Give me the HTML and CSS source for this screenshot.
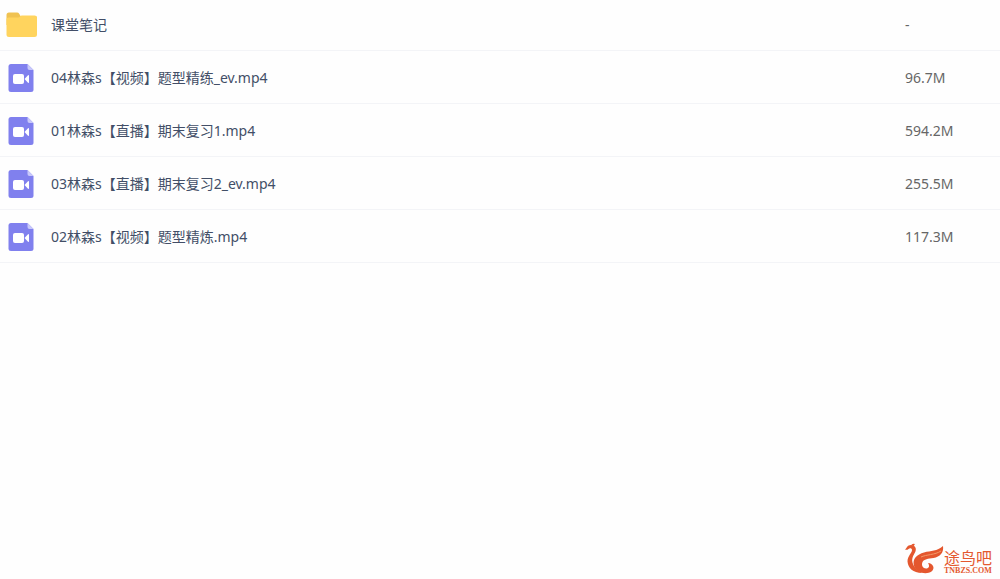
FILE: index.html
```html
<!DOCTYPE html>
<html lang="zh-CN">
<head>
    <meta charset="UTF-8">
    <meta name="viewport" content="width=device-width, initial-scale=1.0">
    <title>课堂笔记</title>
    <link rel="stylesheet" href="styles.css">
</head>
<body>

    <!-- shared file icons -->
    <svg class="sprite" aria-hidden="true">
        <symbol id="icon-folder" viewBox="0 0 32 28">
            <path d="M0.500 4Q0.500 1.500 3 1.500H11Q12.500 1.500 13.200 2.700L14.500 5H29Q31 5 31 7V14H0.500Z" fill="#f0c251"/>
            <path d="M0.500 8Q0.500 6.500 2.500 6.500H12Q13.500 6.500 14 5.500Q14.500 4.500 16 4.500H28.500Q31 4.500 31 7V23.500Q31 26 28.500 26H3Q0.500 26 0.500 23.500Z" fill="#ffd45e"/>
        </symbol>
        <symbol id="icon-video" viewBox="0 0 32 28">
            <path d="M5 0H21.500L27.500 6V25.500Q27.500 28 25 28H5Q2.500 28 2.500 25.500V2.500Q2.500 0 5 0Z" fill="#8080ee"/>
            <path d="M21.500 0L27.500 6H23.500Q21.500 6 21.500 4Z" fill="#c8c8fa"/>
            <rect x="7" y="10" width="11" height="10" rx="2" fill="#fff"/>
            <path d="M18.500 15L22 11.200Q23 10.500 23 12V18Q23 19.500 22 18.800Z" fill="#fff"/>
        </symbol>
    </svg>

    <main>
        <table class="file-list">
            <tbody>
                <tr>
                    <td class="name"><div class="file"><svg class="icon" aria-hidden="true"><use href="#icon-folder"/></svg><span>课堂笔记</span></div></td>
                    <td class="size">-</td>
                </tr>
                <tr>
                    <td class="name"><div class="file"><svg class="icon" aria-hidden="true"><use href="#icon-video"/></svg><span>04林森s【视频】题型精练_ev.mp4</span></div></td>
                    <td class="size">96.7M</td>
                </tr>
                <tr>
                    <td class="name"><div class="file"><svg class="icon" aria-hidden="true"><use href="#icon-video"/></svg><span>01林森s【直播】期末复习1.mp4</span></div></td>
                    <td class="size">594.2M</td>
                </tr>
                <tr>
                    <td class="name"><div class="file"><svg class="icon" aria-hidden="true"><use href="#icon-video"/></svg><span>03林森s【直播】期末复习2_ev.mp4</span></div></td>
                    <td class="size">255.5M</td>
                </tr>
                <tr>
                    <td class="name"><div class="file"><svg class="icon" aria-hidden="true"><use href="#icon-video"/></svg><span>02林森s【视频】题型精炼.mp4</span></div></td>
                    <td class="size">117.3M</td>
                </tr>
            </tbody>
        </table>
    </main>

    <footer class="brand">
        <svg class="brand-logo" viewBox="0 0 40 32" aria-hidden="true">
            <path d="M1 6.500C3 5 3 2 7 2C11.500 2 13 6 11 9.500C9.500 12.500 7.500 15 8.500 19.500C9.500 24 13 27 18 30C9 30 4 25 3.500 18.500C3.500 13 8 10 8 7C8 5 5.500 5 4.500 6C3.500 7 2 7 1 6.500Z" fill="#e4572e"/>
            <path d="M7 2.500Q8 0 11 1Q10 2 10 3Z" fill="#e4572e"/>
            <path d="M39 3C40 9.500 36 14 29.500 15C24 15.800 20 16 18.500 19C17 22.500 19 25.500 22 25.500C25 25.500 26 23 24 20C29 20.500 31.500 25 27.500 28.500C22.500 32 12 30 10 23C8 15.500 13 11.500 20 9.500C27 7.500 33 8.500 39 3Z" fill="#e4572e"/>
            <path d="M17 14C22 11.500 31 12 37 8" fill="none" stroke="#f39a68" stroke-width="1"/>
        </svg>
        <div class="brand-text">
            <span class="brand-name">途鸟吧</span>
            <span class="brand-url">TNBZS.COM</span>
        </div>
    </footer>

</body>
</html>
```

FILE: styles.css
```css
* {
    box-sizing: border-box;
}
body {
    display: flex;
    flex-direction: column;
    justify-content: space-between;
    min-height: 100vh;
    margin: 0;
    background-color: #fefefe;
    color: #424e67;
    font-family: "Noto Sans", "Noto Sans CJK SC", sans-serif;
    font-size: 14px;
    line-height: 20px;
}
.sprite {
    display: none;
}
.file-list {
    width: 100%;
    table-layout: fixed;
    border-collapse: separate;
    border-spacing: 0;
}
.file-list td {
    height: 53px;
    padding: 2px 0 0;
    border-bottom: 1px solid #f3f4f7;
}
.file-list tr:first-child td {
    height: 51px;
    padding-top: 0;
}
.file {
    display: flex;
    align-items: center;
    gap: 13px;
    padding-left: 6px;
}
.icon {
    flex: none;
    width: 32px;
    height: 28px;
}
.file-list .size {
    width: 95px;
    color: #666;
}
.brand {
    display: flex;
    align-items: flex-end;
    align-self: flex-end;
    padding: 0 8px 4px 0;
    color: #e4582f;
}
.brand-logo {
    width: 40px;
    height: 32px;
}
.brand-text {
    display: flex;
    flex-direction: column;
}
.brand-name {
    font-size: 16px;
    line-height: 18px;
}
.brand-url {
    font-family: "Liberation Serif", serif;
    font-size: 8px;
    font-weight: bold;
    line-height: 8px;
}
```
